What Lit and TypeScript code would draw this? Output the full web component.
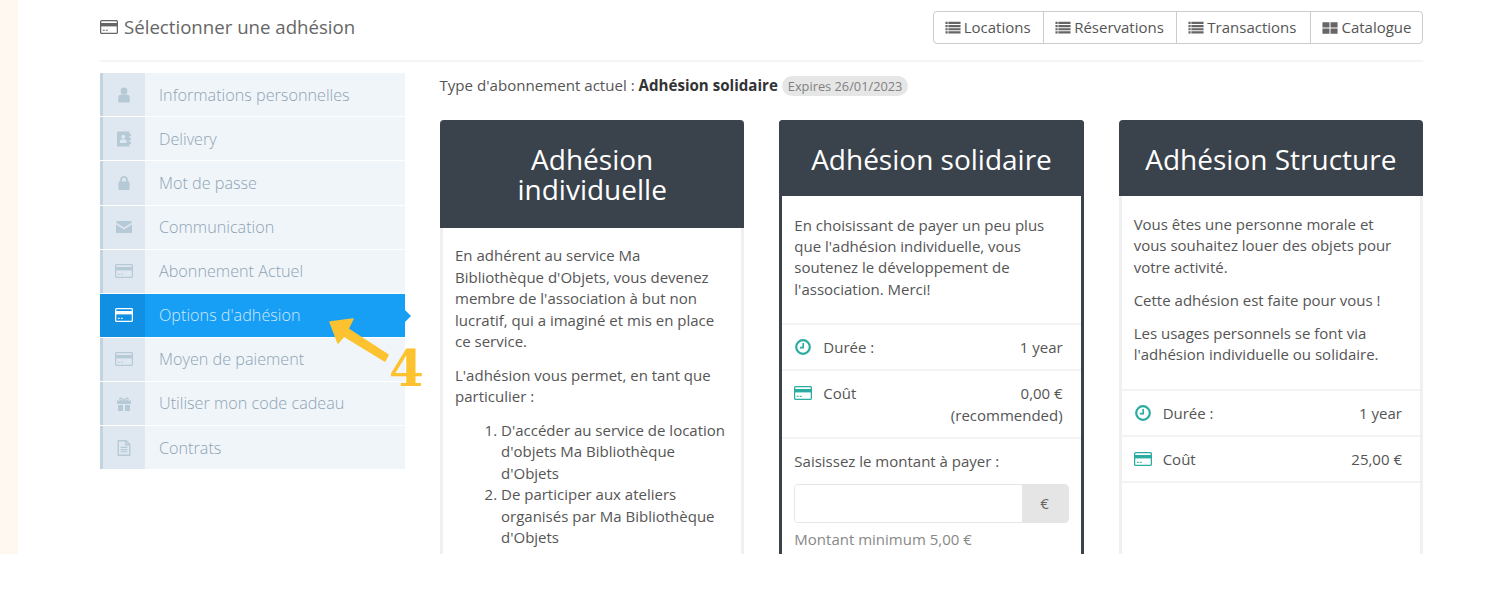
import { LitElement, html, css, svg } from "lit";
import { customElement } from "lit/decorators.js";

const card = svg`<rect x="0.6" y="2.6" width="16.8" height="12.8" rx="1.2" fill="none" stroke="currentColor" stroke-width="1.3"/><rect x="1" y="5" width="16" height="3.4" fill="currentColor"/><rect x="2.8" y="11.8" width="2" height="1" fill="currentColor"/><rect x="5.8" y="11.8" width="2" height="1" fill="currentColor"/>`;
const icons: Record<string, unknown> = {
  user: svg`<circle cx="9" cy="5" r="3.4" fill="currentColor"/><path d="M3.2 15.5V11.6C3.2 9.8 4.6 8.6 6.2 8.6H11.8C13.4 8.6 14.8 9.8 14.8 11.6V15.5C14.8 16.2 14.2 16.5 13.6 16.5H4.4C3.8 16.5 3.2 16.2 3.2 15.5Z" fill="currentColor"/>`,
  book: svg`<path fill-rule="evenodd" d="M3 1.5H14.5V4H16V6H14.5V8H16V10H14.5V12H16V14H14.5V16.5H3C2.4 16.5 2 16 2 15.5V2.5C2 2 2.4 1.5 3 1.5ZM8.2 4.8A2 2 0 1 0 8.2 8.8 2 2 0 1 0 8.2 4.8ZM4.8 13H11.6V11.6C11.6 10.2 10.7 9.6 9.6 9.6H6.8C5.7 9.6 4.8 10.2 4.8 11.6Z" fill="currentColor"/>`,
  lock: svg`<path fill-rule="evenodd" d="M5.2 7.5V5.6C5.2 3.4 6.9 2 9 2S12.8 3.4 12.8 5.6V7.5H13.6C14.2 7.5 14.5 7.9 14.5 8.4V15C14.5 15.6 14.1 16 13.6 16H4.4C3.9 16 3.5 15.6 3.5 15V8.4C3.5 7.9 3.8 7.5 4.4 7.5ZM7 7.5H11V5.6C11 4.5 10.1 3.8 9 3.8S7 4.5 7 5.6Z" fill="currentColor"/>`,
  mail: svg`<path d="M1 4.6C1 3.8 1.6 3 2.4 3H15.6C16.4 3 17 3.8 17 4.6L9 9.6Z" fill="currentColor"/><path d="M1 6.4V14C1 14.6 1.5 15 2 15H16C16.5 15 17 14.6 17 14V6.4L9 11.4Z" fill="currentColor"/>`,
  card,
  gift: svg`<path fill-rule="evenodd" d="M6 2.4C7.2 2.4 8.4 3.4 9 4.8 9.6 3.4 10.8 2.4 12 2.4 13.2 2.4 13.8 3.2 13.8 4 13.8 4.6 13.5 5.2 13 5.6H16V9H2V5.6H5C4.5 5.2 4.2 4.6 4.2 4 4.2 3.2 4.8 2.4 6 2.4ZM6 3.8C5.6 3.8 5.5 4 5.5 4.2 5.5 4.8 6.6 5.4 7.8 5.6 7.4 4.6 6.7 3.8 6 3.8ZM12 3.8C11.3 3.8 10.6 4.6 10.2 5.6 11.4 5.4 12.5 4.8 12.5 4.2 12.5 4 12.4 3.8 12 3.8Z" fill="currentColor"/><path d="M3 10H8V16H4C3.4 16 3 15.6 3 15ZM10 10H15V15C15 15.6 14.6 16 14 16H10Z" fill="currentColor"/>`,
  file: svg`<path fill="none" stroke="currentColor" stroke-width="1.4" d="M3.2 1.7H11L14.8 5.5V16.3H3.2ZM10.8 1.7V5.7H14.8"/><path stroke="currentColor" stroke-width="1.1" d="M5.5 8.4H12.5M5.5 10.6H12.5M5.5 12.8H12.5"/>`,
  list: svg`<path stroke="currentColor" stroke-width="2.5" d="M0.5 3.2H3M3.8 3.2H17.5M0.5 6.8H3M3.8 6.8H17.5M0.5 10.4H3M3.8 10.4H17.5M0.5 14H3M3.8 14H17.5"/>`,
  grid: svg`<path fill="currentColor" d="M0.5 2.5H8.4V8.4H0.5ZM9.6 2.5H17.5V8.4H9.6ZM0.5 9.6H8.4V15.5H0.5ZM9.6 9.6H17.5V15.5H9.6Z"/>`,
  clock: svg`<circle cx="9" cy="9" r="6.8" fill="none" stroke="currentColor" stroke-width="2.2"/><path d="M9.2 5V9.6H5.8" fill="none" stroke="currentColor" stroke-width="1.6"/>`,
};
const icon = (n: string, cls = "") =>
  html`<svg class="ic ${cls}" viewBox="0 0 18 18" aria-hidden="true">${icons[n]}</svg>`;

const menu: [string, string, boolean?][] = [
  ["user", "Informations personnelles"],
  ["book", "Delivery"],
  ["lock", "Mot de passe"],
  ["mail", "Communication"],
  ["card", "Abonnement Actuel"],
  ["card", "Options d'adhésion", true],
  ["card", "Moyen de paiement"],
  ["gift", "Utiliser mon code cadeau"],
  ["file", "Contrats"],
];
const tabs: [string, string][] = [
  ["list", "Locations"],
  ["list", "Réservations"],
  ["list", "Transactions"],
  ["grid", "Catalogue"],
];

@customElement("app-root")
export class AppRoot extends LitElement {
  static styles = css`
    :host {
      display: block;
      height: 554px;
      overflow: hidden;
      background: #fff;
      font-family: "Open Sans", "Liberation Sans", sans-serif;
      font-size: 15px;
      line-height: 21.43px;
      color: #555;
      position: relative;
    }
    .page { display: flex; height: 554px; }
    .band { width: 18px; flex: none; background: #fff8f1; }
    .wrap { width: 1323px; margin-left: 82px; flex: none; }
    .head {
      display: flex;
      justify-content: space-between;
      align-items: flex-start;
      border-bottom: 2px solid #f5f5f5;
      padding-top: 11px;
      box-sizing: border-box;
      height: 62px;
    }
    .title { display: flex; align-items: center; gap: 6px; font-size: 18.65px; line-height: 33px; margin-top: -1px; color: #666; }
    .ic { width: 18px; height: 18px; flex: none; display: block; }
    .tabs { display: flex; border: 1px solid #ccc; border-radius: 4px; height: 33px; box-sizing: border-box; }
    .tab { display: flex; align-items: center; gap: 3px; padding: 1px 12px 0 11.5px; border-left: 1px solid #ccc; color: #555; }
    .tab:first-child { border-left: none; padding-left: 10.5px; }
    .tab:nth-child(3) { padding-right: 13.5px; }
    .tab:nth-child(4) { padding-left: 11.5px; padding-right: 10.5px; }
    .tab .ic { width: 16px; height: 16px; color: #666; }
    .main { display: flex; gap: 35px; margin-top: 11px; align-items: flex-start; }
    .side { width: 305px; flex: none; margin-top: 0.3px; }
    .row {
      display: flex;
      align-items: center;
      height: 43.1px;
      margin-bottom: 1px;
      background: #f0f5fa;
      color: #8ea3b3;
      font-size: 16.2px;
      font-weight: 300;
      position: relative;
    }
    .label { margin-top: 1.4px; }
    .cell {
      width: 42px;
      height: 100%;
      flex: none;
      display: flex;
      align-items: center;
      justify-content: center;
      background: #dfe8f0;
      border-left: 3px solid #c3d3df;
      margin-right: 14px;
      color: #b6c9d6;
    }
    .row.on { background: #179ef5; color: #cde9fc; }
    .row.on .cell { background: #118fe2; border-left-color: #118fe2; color: #fff; }
    .row.on::after {
      content: "";
      position: absolute;
      left: 100%;
      top: 16px;
      border-left: 6px solid #179ef5;
      border-top: 6px solid transparent;
      border-bottom: 6px solid transparent;
    }
    .content { flex: 1; min-width: 0; }
    .cur { display: flex; align-items: center; height: 25px; margin-bottom: 22px; white-space: pre; margin-left: -0.5px; font-size: 15.1px; }
    .cur b { font-weight: 700; color: #333; }
    .badge {
      margin-left: 4px;
      background: #e6e6e6;
      color: #808080;
      font-size: 12.8px;
      line-height: 20px;
      padding: 0 6px;
      border-radius: 10px;
    }
    .cards { display: grid; grid-template-columns: repeat(3, 1fr); column-gap: 35px; }
    .cardbox {
      border: 3px solid #f0f0f0;
      border-top: none;
      border-radius: 4px 4px 0 0;
      height: 560px;
      box-sizing: border-box;
      background: #fff;
    }
    .cardbox.sel { border-color: #3a424c; }
    .ch {
      margin: 0 -3px;
      background: #3a424c;
      color: #fff;
      font-size: 28px;
      line-height: 30px;
      font-weight: 400;
      text-align: center;
      padding: 24px 30px 24px;
      border-radius: 4px 4px 0 0;
    }
    .ch.one { padding: 24px 10px 22px; }
    .txt { padding: 18px 12px 0; }
    .txt p { margin: 0 0 11.5px; }
    .txt.first { padding-top: 17px; line-height: 21.5px; }
    .txt.first p { margin-bottom: 12px; }
    .txt.mid { padding-top: 18.5px; }
    .txt.mid p { margin-bottom: 11px; }
    .txt ol { margin: 0; padding-left: 46px; }
    .li { display: flex; justify-content: space-between; border-top: 2px solid #f3f3f3; padding: 12px 18px 10.6px 12px; }
    .li:last-of-type { border-bottom: 2px solid #f3f3f3; }
    .li .k { display: flex; align-items: flex-start; gap: 11px; }
    .li .k .ic { color: #2aaca0; width: 18px; height: 18px; margin-top: 1px; }
    .li .v { text-align: right; }
    .form { padding: 11.8px 12px 0; border-top: 2px solid #f3f3f3; }
    .group { display: flex; height: 39px; margin-top: 12px; border-radius: 4px; overflow: hidden; border: 1px solid #e5e5e5; box-sizing: border-box; }
    .inp { flex: 1; background: #fff; }
    .addon { width: 46px; background: #e5e5e5; color: #666; display: flex; align-items: center; justify-content: center; }
    .help { color: #888; margin-top: 6px; }
    .gap { height: 12px; }
    .mark { position: absolute; left: 328px; top: 316px; width: 100px; height: 80px; pointer-events: none; }
    .four {
      position: absolute;
      left: 389px;
      top: 339px;
      font-family: "DejaVu Serif", serif;
      font-weight: 700;
      font-size: 50px;
      line-height: 60px;
      color: #fcc22f;
    }
  `;

  private li(ic: string, k: string, v: unknown) {
    return html`<div class="li"><span class="k">${icon(ic)}${k}</span><span class="v">${v}</span></div>`;
  }

  render() {
    return html`
      <div class="page">
        <div class="band"></div>
        <div class="wrap">
          <div class="head">
            <div class="title">${icon("card")}Sélectionner une adhésion</div>
            <div class="tabs">
              ${tabs.map(([i, t]) => html`<div class="tab">${icon(i)}${t}</div>`)}
            </div>
          </div>
          <div class="main">
            <div class="side">
              ${menu.map(
                ([i, t, on]) => html`<div class="row ${on ? "on" : ""}"><div class="cell">${icon(i)}</div><span class="label">${t}</span></div>`
              )}
            </div>
            <div class="content">
              <div class="cur">Type d'abonnement actuel : <b>Adhésion solidaire</b><span class="badge">Expires 26/01/2023</span></div>
              <div class="cards">
                <div class="cardbox">
                  <div class="ch">Adhésion individuelle</div>
                  <div class="txt first">
                    <p>En adhérent au service Ma Bibliothèque d'Objets, vous devenez membre de l'association à but non lucratif, qui a imaginé et mis en place ce service.</p>
                    <p>L'adhésion vous permet, en tant que particulier :</p>
                    <ol>
                      <li>D'accéder au service de location d'objets Ma Bibliothèque d'Objets</li>
                      <li>De participer aux ateliers organisés par Ma Bibliothèque d'Objets</li>
                    </ol>
                  </div>
                </div>
                <div class="cardbox sel">
                  <div class="ch one">Adhésion solidaire</div>
                  <div class="txt mid">
                    <p>En choisissant de payer un peu plus que l'adhésion individuelle, vous soutenez le développement de l'association. Merci!</p>
                  </div>
                  <div class="gap"></div>
                  ${this.li("clock", "Durée :", "1 year")}
                  ${this.li("card", "Coût", html`0,00 €<br />(recommended)`)}
                  <div class="form">
                    Saisissez le montant à payer :
                    <div class="group"><div class="inp"></div><div class="addon">€</div></div>
                    <div class="help">Montant minimum 5,00 €</div>
                  </div>
                </div>
                <div class="cardbox">
                  <div class="ch one">Adhésion Structure</div>
                  <div class="txt">
                    <p>Vous êtes une personne morale et vous souhaitez louer des objets pour votre activité.</p>
                    <p>Cette adhésion est faite pour vous !</p>
                    <p>Les usages personnels se font via l'adhésion individuelle ou solidaire.</p>
                  </div>
                  <div class="gap"></div>
                  ${this.li("clock", "Durée :", "1 year")}
                  ${this.li("card", "Coût", "25,00 €")}
                </div>
              </div>
            </div>
          </div>
        </div>
      </div>
      <svg class="mark" viewBox="0 0 100 80" aria-hidden="true">
        <path d="M2 6L25 3 20 13 60 39 57 45 16 20 10 27Z" fill="#fcc22f" stroke="#fcc22f" stroke-width="1.5" stroke-linejoin="round"/>
      </svg>
      <div class="four">4</div>
    `;
  }
}
